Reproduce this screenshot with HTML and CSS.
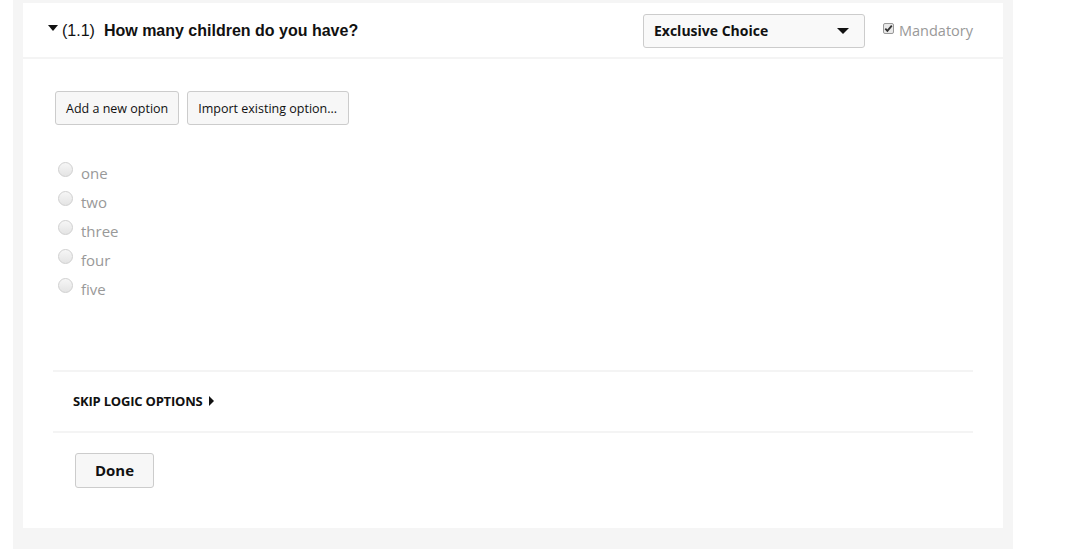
FILE: index.html
```html
<!DOCTYPE html>
<html>
<head>
<meta charset="utf-8">
<link rel="stylesheet" href="styles.css">
</head>
<body>
<div class="outer">
  <div class="card">
    <div class="header">
      <div class="title">
        <span class="caret"></span><span class="num">(1.1)</span>
        <span class="q">How many children do you have?</span>
      </div>
      <div class="select">
        <span>Exclusive Choice</span>
        <span class="sel-caret"></span>
      </div>
      <label class="mand"><span class="cb">
        <svg width="11" height="11" viewBox="0 0 11 11"><rect x="0.5" y="0.5" width="10" height="10" rx="1.5" fill="#e8e8e8" stroke="#999"/><path d="M2.3 5.6 L4.4 7.8 L8.8 2.6" fill="none" stroke="#333" stroke-width="1.8"/></svg>
      </span>Mandatory</label>
    </div>
    <div class="body">
      <div class="btns">
        <button class="btn">Add a new option</button>
        <button class="btn">Import existing option...</button>
      </div>
      <ul class="opts">
        <li><span class="radio"></span>one</li>
        <li><span class="radio"></span>two</li>
        <li><span class="radio"></span>three</li>
        <li><span class="radio"></span>four</li>
        <li><span class="radio"></span>five</li>
      </ul>
      <div class="skip">SKIP LOGIC OPTIONS <span class="tri"></span></div>
      <div class="foot">
        <button class="done">Done</button>
      </div>
    </div>
  </div>
</div>
</body>
</html>
```
FILE: styles.css
```css
* { box-sizing: border-box; }
html, body { margin: 0; padding: 0; background: #fff; }
body { font-family: "Open Sans", "DejaVu Sans", sans-serif; }
.outer {
  margin-left: 13px;
  width: 1000px;
  height: 549px;
  background: #f5f5f5;
  padding: 3px 10px 21px 10px;
}
.card {
  background: #fff;
  height: 525px;
}
.header {
  height: 56px;
  border-bottom: 2px solid #f4f4f4;
  display: flex;
  align-items: center;
  padding-left: 25px;
  padding-top: 2px;
}
.title {
  font-family: "Liberation Sans", Arial, sans-serif;
  font-size: 16px;
  color: #111;
  flex: 1;
  display: flex;
  align-items: center;
}
.caret {
  width: 0; height: 0;
  border-left: 5px solid transparent;
  border-right: 5px solid transparent;
  border-top: 6px solid #111;
  margin-right: 4px;
  position: relative;
  top: -3px;
}
.num { margin-right: 9px; }
.q { font-weight: bold; }
.select {
  width: 222px;
  height: 34px;
  border: 1px solid #ccc;
  border-radius: 3px;
  background: #f9f9f9;
  display: flex;
  align-items: center;
  justify-content: space-between;
  padding: 0 15px 0 10px;
  font-weight: bold;
  font-size: 14px;
  color: #111;
  margin-top: -1px;
}
.sel-caret {
  width: 0; height: 0;
  border-left: 6px solid transparent;
  border-right: 6px solid transparent;
  border-top: 6px solid #111;
}
.mand {
  margin-left: 18px;
  margin-right: 30px;
  color: #999;
  font-size: 14.5px;
  display: flex;
  align-items: center;
  margin-top: -2px;
}
.cb { display: inline-flex; margin-right: 5px; position: relative; top: -2px; }
.body { padding: 32px 30px 0 32px; }
.btns { display: flex; gap: 8px; }
.btn {
  font-family: "Open Sans", "DejaVu Sans", sans-serif;
  font-size: 12.5px;
  color: #111;
  height: 34px;
  padding: 0 10px;
  background: #f7f7f7;
  border: 1px solid #ccc;
  border-radius: 3px;
  margin: 0;
}
.btn + .btn { padding: 0 11px 0 10px; }
.opts {
  list-style: none;
  margin: 33px 0 0 0;
  padding: 0 0 0 3px;
}
.opts li {
  height: 29px;
  display: flex;
  align-items: center;
  color: #999;
  font-size: 15px;
  position: relative;
}
.radio {
  width: 15px; height: 15px;
  border-radius: 50%;
  border: 1px solid #d0d0d0;
  background: linear-gradient(#f6f6f6, #e4e4e4);
  margin-right: 8px;
  position: relative;
  top: -3px;
}
.skip {
  margin-top: 67px;
  margin-left: -2px;
  border-top: 2px solid #f4f4f4;
  border-bottom: 2px solid #f4f4f4;
  height: 63px;
  display: flex;
  align-items: center;
  padding-left: 20px;
  padding-bottom: 2px;
  font-size: 13px;
  font-weight: bold;
  color: #111;
  letter-spacing: -0.2px;
}
.tri {
  display: inline-block;
  width: 0; height: 0;
  border-top: 5px solid transparent;
  border-bottom: 5px solid transparent;
  border-left: 5px solid #111;
  margin-left: 6px;
}
.foot { padding: 20px 0 0 20px; }
.done {
  font-family: "Open Sans", "DejaVu Sans", sans-serif;
  width: 79px;
  height: 35px;
  font-size: 15px;
  font-weight: bold;
  color: #111;
  background: #f7f7f7;
  border: 1px solid #ccc;
  border-radius: 3px;
  margin: 0;
  padding-bottom: 2px;
}
```
